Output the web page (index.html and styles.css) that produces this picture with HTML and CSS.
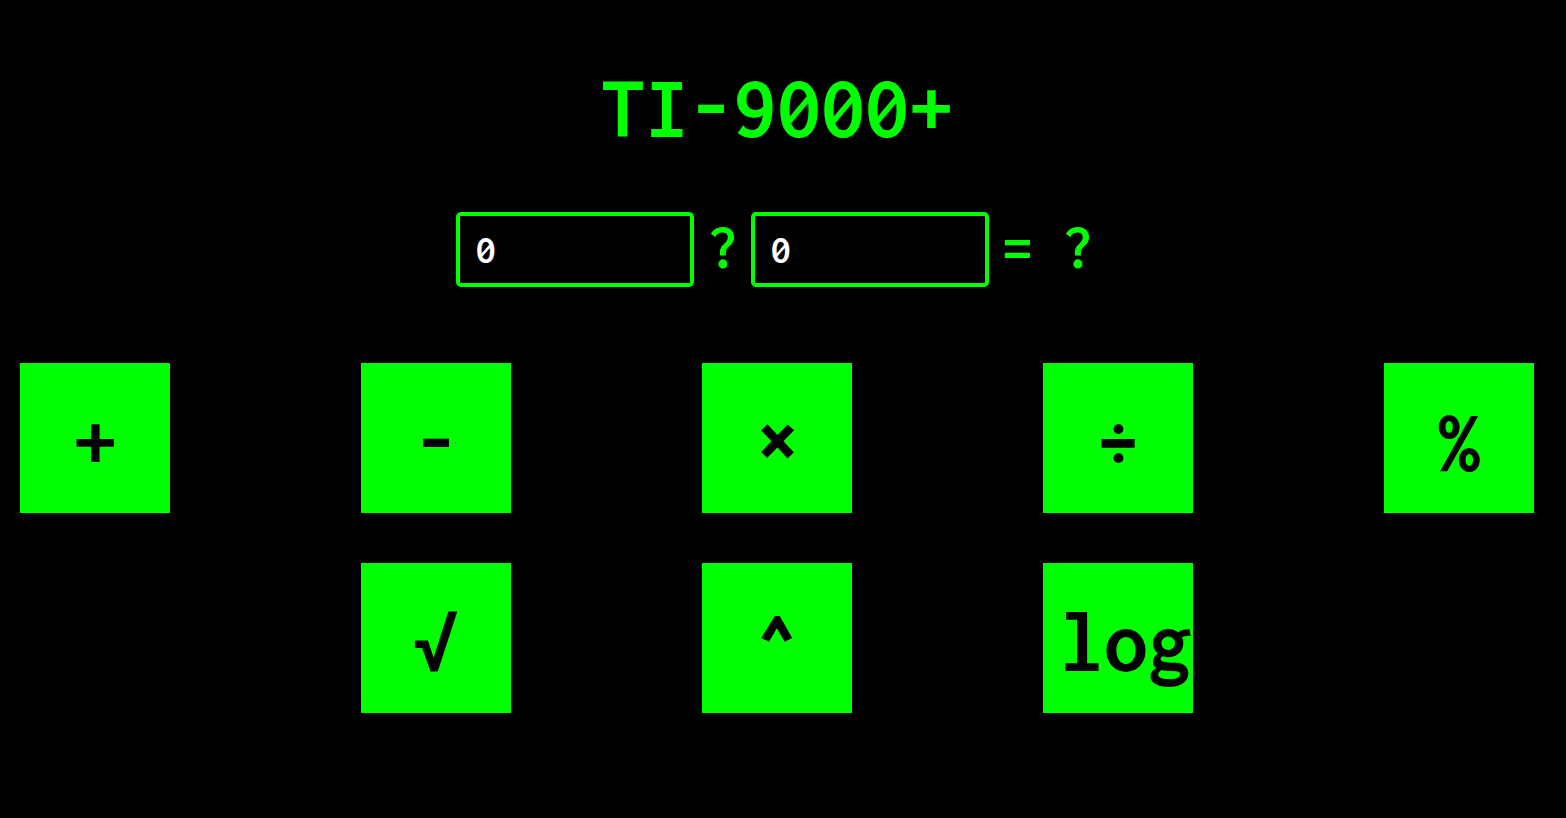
FILE: index.html
```html
<!DOCTYPE html>
<html lang="en">
<head>
  <meta charset="UTF-8">
  <meta name="viewport" content="width=device-width, initial-scale=1.0">
  <title>TI-9000+</title>
  <link rel="stylesheet" href="styles.css">
</head>
<body>
  <div class="calc">
    <h1 class="title">TI-9000+</h1>

    <div class="display">
      <input class="num" type="text" value="0">
      <span class="op">?</span>
      <input class="num" type="text" value="0">
      <span class="result">= ?</span>
    </div>

    <div class="keys">
      <button class="key">+</button>
      <button class="key">-</button>
      <button class="key">&times;</button>
      <button class="key">&divide;</button>
      <button class="key">%</button>
      <button class="key col2">&radic;</button>
      <button class="key">^</button>
      <button class="key wide">log</button>
    </div>
  </div>
</body>
</html>
```

FILE: styles.css
```css
* {margin: 0; padding: 0; box-sizing: border-box;}
body {background: #000; font-family: "Inconsolata", monospace; color: #00ff00;}

.calc {width: 1554px; padding: 0 20px;}
.title {text-align: center; font-size: 88px; font-weight: bold; line-height: 1; padding-top: 64px; height: 212px;}

.display {display: flex; justify-content: center; align-items: center; gap: 13.5px; height: 75px;}
.display .num {width: 238px; height: 75px; background: #000; color: #fff; border: 4px solid #00ff00; border-radius: 5px; font-family: inherit; font-size: 40px; font-weight: bold; padding-left: 16px; outline: none;}
.display .op, .display .result {font-size: 60px; font-weight: bold; white-space: pre; padding-bottom: 4px;}
.display .result {padding-right: 6px;}

.keys {display: grid; grid-template-columns: repeat(5, 150px); justify-content: space-between; row-gap: 50px; margin-top: 76px;}
.key {width: 150px; height: 150px; padding-top: 7px; background: #00ff00; color: #000; border: none; font-family: inherit; font-size: 88px; font-weight: bold;}
.key.col2 {grid-column: 2;}
.key.wide {padding-left: 16px; white-space: nowrap;}
```
